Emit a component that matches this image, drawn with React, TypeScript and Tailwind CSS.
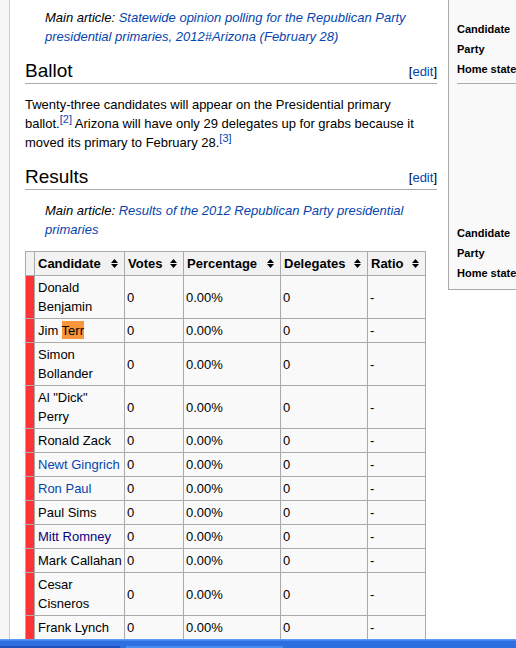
const link = 'text-[#0645ad]';

type Row = { name: string[]; color?: string; highlight?: boolean };

const rows: Row[] = [
  { name: ['Donald', 'Benjamin'] },
  { name: ['Jim Terr'], highlight: true },
  { name: ['Simon', 'Bollander'] },
  { name: ['Al "Dick"', 'Perry'] },
  { name: ['Ronald Zack'] },
  { name: ['Newt Gingrich'], color: 'text-[#0645ad]' },
  { name: ['Ron Paul'], color: 'text-[#0645ad]' },
  { name: ['Paul Sims'] },
  { name: ['Mitt Romney'], color: 'text-[#0b0080]' },
  { name: ['Mark Callahan'] },
  { name: ['Cesar', 'Cisneros'] },
  { name: ['Frank Lynch'] },
];

function SortIcon() {
  return (
    <svg width="7" height="9" viewBox="0 0 7 9" className="shrink-0">
      <path d="M0 4 L3.5 0 L7 4 Z M0 5 L3.5 9 L7 5 Z" fill="#000" />
    </svg>
  );
}

function Heading({ title }: { title: string }) {
  return (
    <h2 className="flex items-center justify-between border-b border-[#aaa] text-[19px] leading-[24px] font-normal">
      <span>{title}</span>
      <span className="text-[13px] leading-[19px]">
        [<span className={link}>edit</span>]
      </span>
    </h2>
  );
}

function Hatnote({ lines }: { lines: string[] }) {
  return (
    <div className="pl-[20px] text-[13px] leading-[19px] italic whitespace-nowrap">
      Main article: <span className={link}>{lines[0]}</span>
      <br />
      <span className={link}>{lines[1]}</span>
    </div>
  );
}

function Results() {
  const th = 'border border-[#aaa] bg-[#f2f2f2] pl-[3px] pr-[6px] py-[2px] text-left font-bold';
  const td = 'border border-[#aaa] pl-[2px] pr-[2px] py-[2px]';
  const heads = ['Candidate', 'Votes', 'Percentage', 'Delegates', 'Ratio'];
  return (
    <table className="mt-[12px] w-[400px] table-fixed border-collapse bg-[#f9f9f9] text-[13px] leading-[19px]">
      <colgroup>
        <col className="w-[9px]" />
        <col className="w-[90px]" />
        <col className="w-[59px]" />
        <col className="w-[97px]" />
        <col className="w-[87px]" />
        <col className="w-[58px]" />
      </colgroup>
      <thead>
        <tr>
          <th className="border border-[#aaa] bg-[#f2f2f2] p-0" />
          {heads.map((h) => (
            <th key={h} className={th}>
              <div className="flex items-center justify-between">
                <span>{h}</span>
                <SortIcon />
              </div>
            </th>
          ))}
        </tr>
      </thead>
      <tbody>
        {rows.map((r) => (
          <tr key={r.name.join(' ')}>
            <td className="border border-[#aaa] bg-[#ff3333] p-0" />
            <td className={`border border-[#aaa] pl-[3px] pr-[1px] py-[2px] whitespace-nowrap ${r.color ?? ''}`}>
              {r.highlight ? (
                <>
                  Jim <span className="bg-[#f7963a] pt-[2px] pb-[1px]">Terr</span>
                </>
              ) : (
                r.name.map((n, i) => (
                  <span key={n}>
                    {i > 0 && <br />}
                    {n}
                  </span>
                ))
              )}
            </td>
            <td className={td}>0</td>
            <td className={td}>0.00%</td>
            <td className={td}>0</td>
            <td className={td}>-</td>
          </tr>
        ))}
      </tbody>
    </table>
  );
}

function SidePanel() {
  const item = 'h-[20px] leading-[20px] text-[11px] font-bold whitespace-nowrap';
  return (
    <aside className="ml-[11px] w-[120px] shrink-0 self-start border-l border-b border-[#aaa] bg-[#f9f9f9] pt-[19px] pb-[6px] pl-[8px]">
      <div className={item}>Candidate</div>
      <div className={item}>Party</div>
      <div className={item}>Home state</div>
      <div className="mt-[4px] border-t border-[#aaa]" />
      <div className="h-[139px]" />
      <div className={item}>Candidate</div>
      <div className={item}>Party</div>
      <div className={item}>Home state</div>
    </aside>
  );
}

function Taskbar() {
  return (
    <div className="flex h-[9px] shrink-0 flex-col bg-[#2f6ee0]">
      <div className="h-[1px] bg-[#5a9cf5]" />
      <div className="h-[1px] bg-[#3f86ee]" />
      <div className="h-[5px]" />
      <div className="flex h-[2px]">
        <div className="w-[120px] bg-[#1f4fb8]" />
        <div className="ml-[6px] w-[157px] bg-[#4a8cf0]" />
      </div>
    </div>
  );
}

export default function App() {
  return (
    <div className="flex h-[648px] w-[516px] flex-col overflow-hidden font-['Liberation_Sans',Arial,sans-serif] text-black">
      <div className="flex h-[639px] overflow-hidden bg-[#f6f6f6]">
        <div className="w-[9px] shrink-0" />
        <div className="flex min-w-0 flex-1 border-l border-[#a7d7f9] bg-white">
          <main className="ml-[15px] w-[412px] shrink-0 pt-[8px]">
            <Hatnote
              lines={[
                'Statewide opinion polling for the Republican Party',
                'presidential primaries, 2012#Arizona (February 28)',
              ]}
            />
            <div className="mt-[13px]">
              <Heading title="Ballot" />
            </div>
            <p className="mt-[11px] text-[13px] leading-[19px] whitespace-nowrap">
              Twenty-three candidates will appear on the Presidential primary
              <br />
              ballot.<sup className={`${link} text-[11px]`}>[2]</sup> Arizona will have only 29 delegates up for grabs because it
              <br />
              moved its primary to February 28.<sup className={`${link} text-[11px]`}>[3]</sup>
            </p>
            <div className="mt-[13px]">
              <Heading title="Results" />
            </div>
            <div className="mt-[11px]">
              <Hatnote lines={['Results of the 2012 Republican Party presidential', 'primaries']} />
            </div>
            <Results />
          </main>
          <SidePanel />
        </div>
      </div>
      <Taskbar />
    </div>
  );
}
